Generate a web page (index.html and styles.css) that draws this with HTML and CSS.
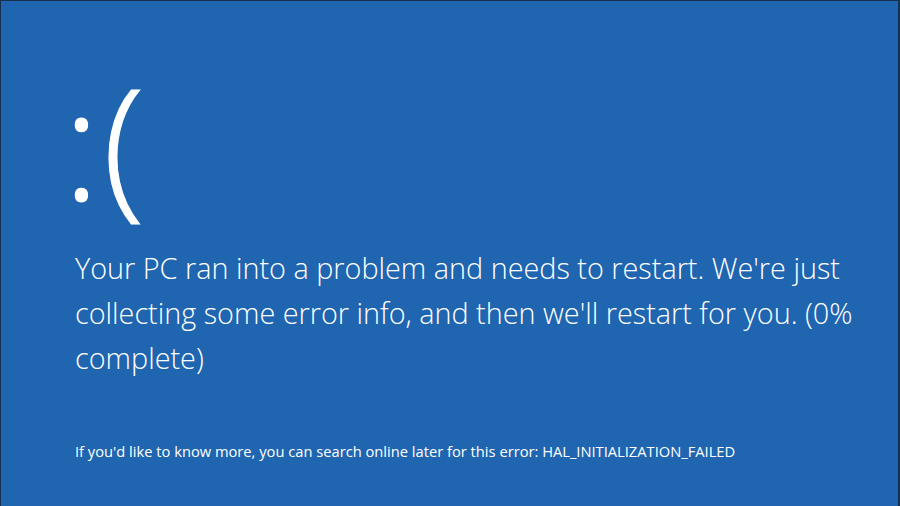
FILE: index.html
```html
<!DOCTYPE html>
<html lang="en">
<head>
<meta charset="utf-8">
<title>Your PC ran into a problem</title>
<link rel="stylesheet" href="styles.css">
</head>
<body>
<main class="screen">
  <div class="face">:(</div>
  <p class="message">Your PC ran into a problem and needs to restart. We're just collecting some error info, and then we'll restart for you. (0% complete)</p>
  <p class="info">If you'd like to know more, you can search online later for this error: HAL_INITIALIZATION_FAILED</p>
</main>
</body>
</html>
```
FILE: styles.css
```css
html, body {
  margin: 0;
  padding: 0;
  width: 900px;
  height: 506px;
  overflow: hidden;
  background: #1f65b0;
}
.screen {
  box-sizing: border-box;
  width: 900px;
  height: 506px;
  background: #1f65b0;
  border-top: 1px solid #17304f;
  border-left: 1px solid #17304f;
  border-right: 2px solid #17304f;
  padding: 54px 0 0 74px;
  color: #ffffff;
  font-family: "Open Sans", "Noto Sans", sans-serif;
  display: flex;
  flex-direction: column;
}
.face {
  margin-left: -12px;
  font-size: 154px;
  font-weight: 300;
  line-height: 170px;
  height: 170px;
  letter-spacing: 3px;
  -webkit-text-stroke: 1.2px #ffffff;
}
.message {
  margin: 20px 0 0 0;
  width: 810px;
  font-size: 28.8px;
  font-weight: 300;
  line-height: 45px;
}
.info {
  margin: 62px 0 0 0;
  font-size: 14.7px;
  font-weight: 400;
  line-height: 18px;
}
```
